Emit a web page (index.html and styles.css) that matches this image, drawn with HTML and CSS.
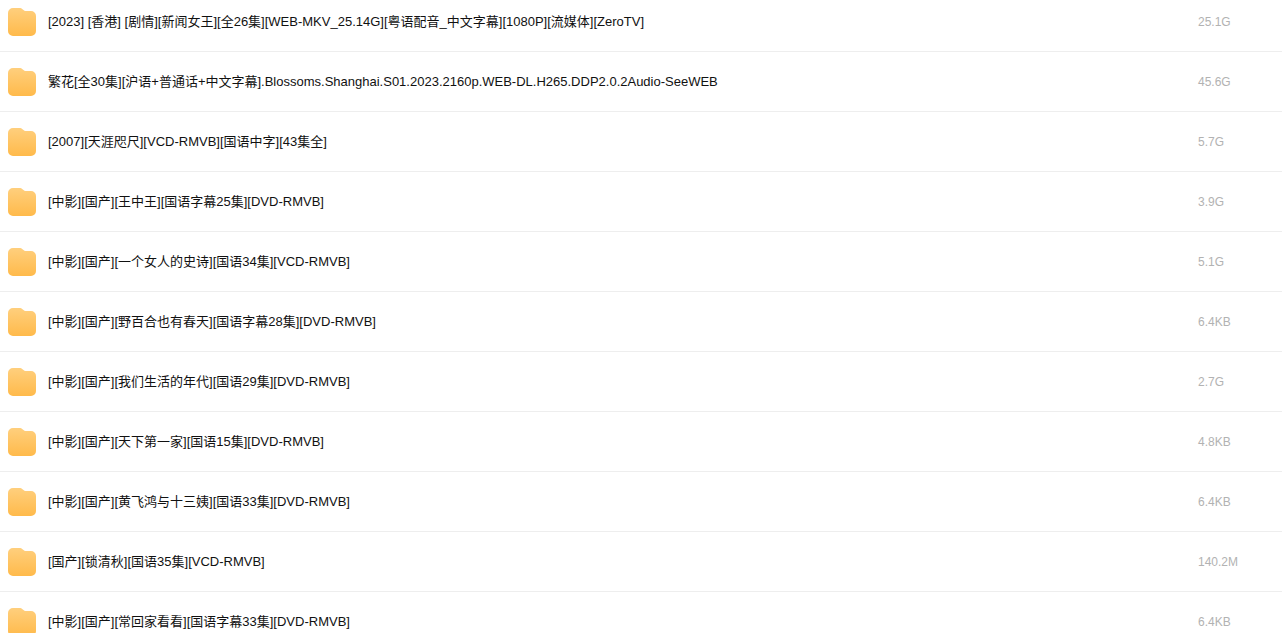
FILE: index.html
```html
<!DOCTYPE html>
<html lang="zh-CN">
  <head>
    <title>文件列表</title>
    <meta charset="UTF-8" />
    <link rel="stylesheet" href="styles.css">
  </head>
  <body>
    <svg class="sprite" aria-hidden="true">
      <defs>
        <linearGradient id="folderFill" x1="0" y1="0" x2="0" y2="1">
          <stop offset="0" stop-color="#ffcf7d" />
          <stop offset="1" stop-color="#ffba4b" />
        </linearGradient>
        <symbol id="folder" viewBox="0 0 28 28">
          <path
            fill="url(#folderFill)"
            d="M5 0h6.500c1.300 0 2.200.400 3 1.200l1 .9c.6.600 1.200.9 2 .9H23a5 5 0 0 1 5 5v15a5 5 0 0 1-5 5H5a5 5 0 0 1-5-5V5a5 5 0 0 1 5-5z"
          />
        </symbol>
      </defs>
    </svg>
    <table class="files">
      <tbody>
        <tr>
          <td class="name"><a href="#"><svg class="icon"><use href="#folder" /></svg>[2023] [香港] [剧情][新闻女王][全26集][WEB-MKV_25.14G][粤语配音_中文字幕][1080P][流媒体][ZeroTV]</a></td>
          <td class="size">25.1G</td>
        </tr>
        <tr>
          <td class="name"><a href="#"><svg class="icon"><use href="#folder" /></svg>繁花[全30集][沪语+普通话+中文字幕].Blossoms.Shanghai.S01.2023.2160p.WEB-DL.H265.DDP2.0.2Audio-SeeWEB</a></td>
          <td class="size">45.6G</td>
        </tr>
        <tr>
          <td class="name"><a href="#"><svg class="icon"><use href="#folder" /></svg>[2007][天涯咫尺][VCD-RMVB][国语中字][43集全]</a></td>
          <td class="size">5.7G</td>
        </tr>
        <tr>
          <td class="name"><a href="#"><svg class="icon"><use href="#folder" /></svg>[中影][国产][王中王][国语字幕25集][DVD-RMVB]</a></td>
          <td class="size">3.9G</td>
        </tr>
        <tr>
          <td class="name"><a href="#"><svg class="icon"><use href="#folder" /></svg>[中影][国产][一个女人的史诗][国语34集][VCD-RMVB]</a></td>
          <td class="size">5.1G</td>
        </tr>
        <tr>
          <td class="name"><a href="#"><svg class="icon"><use href="#folder" /></svg>[中影][国产][野百合也有春天][国语字幕28集][DVD-RMVB]</a></td>
          <td class="size">6.4KB</td>
        </tr>
        <tr>
          <td class="name"><a href="#"><svg class="icon"><use href="#folder" /></svg>[中影][国产][我们生活的年代][国语29集][DVD-RMVB]</a></td>
          <td class="size">2.7G</td>
        </tr>
        <tr>
          <td class="name"><a href="#"><svg class="icon"><use href="#folder" /></svg>[中影][国产][天下第一家][国语15集][DVD-RMVB]</a></td>
          <td class="size">4.8KB</td>
        </tr>
        <tr>
          <td class="name"><a href="#"><svg class="icon"><use href="#folder" /></svg>[中影][国产][黄飞鸿与十三姨][国语33集][DVD-RMVB]</a></td>
          <td class="size">6.4KB</td>
        </tr>
        <tr>
          <td class="name"><a href="#"><svg class="icon"><use href="#folder" /></svg>[国产][锁清秋][国语35集][VCD-RMVB]</a></td>
          <td class="size">140.2M</td>
        </tr>
        <tr>
          <td class="name"><a href="#"><svg class="icon"><use href="#folder" /></svg>[中影][国产][常回家看看][国语字幕33集][DVD-RMVB]</a></td>
          <td class="size">6.4KB</td>
        </tr>
      </tbody>
    </table>
  </body>
</html>
```
FILE: styles.css
```css
body {
  height: 100vh;
  margin: 0;
  overflow: hidden;
  background: #fff;
  font-family: "Liberation Sans", "Noto Sans CJK SC", sans-serif;
  font-size: 13px;
  line-height: 28px;
}
.sprite {
  display: block;
  width: 0;
  height: 0;
}
.files {
  width: 100%;
  margin-top: -8px;
  border-collapse: separate;
  border-spacing: 0;
}
.files td {
  padding: 16px 0 15px;
  border-bottom: 1px solid #eee;
}
.name a {
  display: flex;
  gap: 12px;
  padding-left: 8px;
  color: #111;
  text-decoration: none;
}
.icon {
  flex: none;
  width: 28px;
  height: 28px;
}
.files .size {
  width: 84px;
  color: #b2b2b2;
  font-size: 12px;
}
```
